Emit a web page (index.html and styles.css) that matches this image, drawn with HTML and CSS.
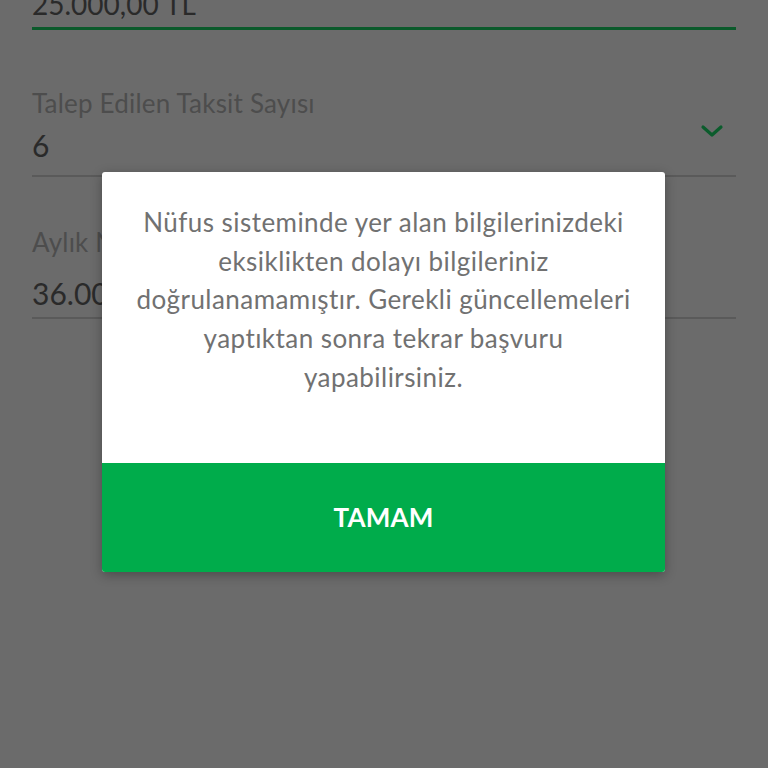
FILE: index.html
```html
<!DOCTYPE html>
<html lang="tr">
<head>
<meta charset="utf-8">
<title>Başvuru</title>
<link rel="stylesheet" href="styles.css">
</head>
<body>
<main class="form">
  <div class="field field-amount">
    <div class="value">25.000,00 TL</div>
  </div>
  <div class="field field-taksit">
    <div class="label">Talep Edilen Taksit Sayısı</div>
    <div class="value-row">
      <div class="value">6</div>
      <svg class="chevron" width="24" height="14" viewBox="0 0 24 14"><polyline points="3,3 12,11 21,3" fill="none" stroke="#0b5c2c" stroke-width="3.2" stroke-linecap="round" stroke-linejoin="round"/></svg>
    </div>
  </div>
  <div class="field field-aylik">
    <div class="label">Aylık Net Gelir</div>
    <div class="value">36.000,00 TL</div>
  </div>
</main>
<div class="dialog">
  <p class="message">Nüfus sisteminde yer alan bilgilerinizdeki<br>eksiklikten dolayı bilgileriniz<br>doğrulanamamıştır. Gerekli güncellemeleri<br>yaptıktan sonra tekrar başvuru<br>yapabilirsiniz.</p>
  <button class="ok">TAMAM</button>
</div>
</body>
</html>
```
FILE: styles.css
```css
html, body {
  margin: 0;
  padding: 0;
  height: 100%;
  overflow: hidden;
}
body {
  background: #6b6b6b;
  font-family: Lato, "Open Sans", sans-serif;
  position: relative;
}
.form {
  padding: 0 32px;
}
.field .label {
  font-size: 26px;
  line-height: 30px;
  color: #4d4d4d;
  white-space: nowrap;
  letter-spacing: 0.2px;
}
.field .value {
  font-size: 30px;
  line-height: 36px;
  color: #2a2a2a;
  white-space: nowrap;
}
.field-amount {
  margin-top: -12px;
  padding-bottom: 7px;
  border-bottom: 3px solid #0b5a2b;
}
.field-amount .value {
  font-size: 28px;
  line-height: 32px;
}
.field-taksit {
  margin-top: 58px;
  padding-bottom: 12px;
  border-bottom: 2px solid #5a5a5a;
}
.field-taksit .value-row {
  margin-top: 9px;
  display: flex;
  justify-content: space-between;
  align-items: flex-start;
}
.chevron {
  margin-top: -3px;
  margin-right: 12px;
}
.field-aylik {
  margin-top: 50px;
  padding-bottom: 6px;
  border-bottom: 2px solid #5a5a5a;
}
.field-aylik .value {
  margin-top: 18px;
}
.dialog {
  position: absolute;
  top: 172px;
  left: 102px;
  width: 563px;
  background: #ffffff;
  border-radius: 3px;
  overflow: hidden;
  box-shadow: 0 3px 12px rgba(0, 0, 0, 0.3);
  display: flex;
  flex-direction: column;
}
.message {
  margin: 0;
  padding: 31px 10px 66px;
  text-align: center;
  font-size: 26px;
  line-height: 38.7px;
  letter-spacing: 0.45px;
  color: #717171;
}
.ok {
  height: 109px;
  border: 0;
  margin: 0;
  background: #00ac4b;
  color: #ffffff;
  font-family: Lato, "Open Sans", sans-serif;
  font-weight: 700;
  font-size: 26px;
  letter-spacing: 0.2px;
}
```
